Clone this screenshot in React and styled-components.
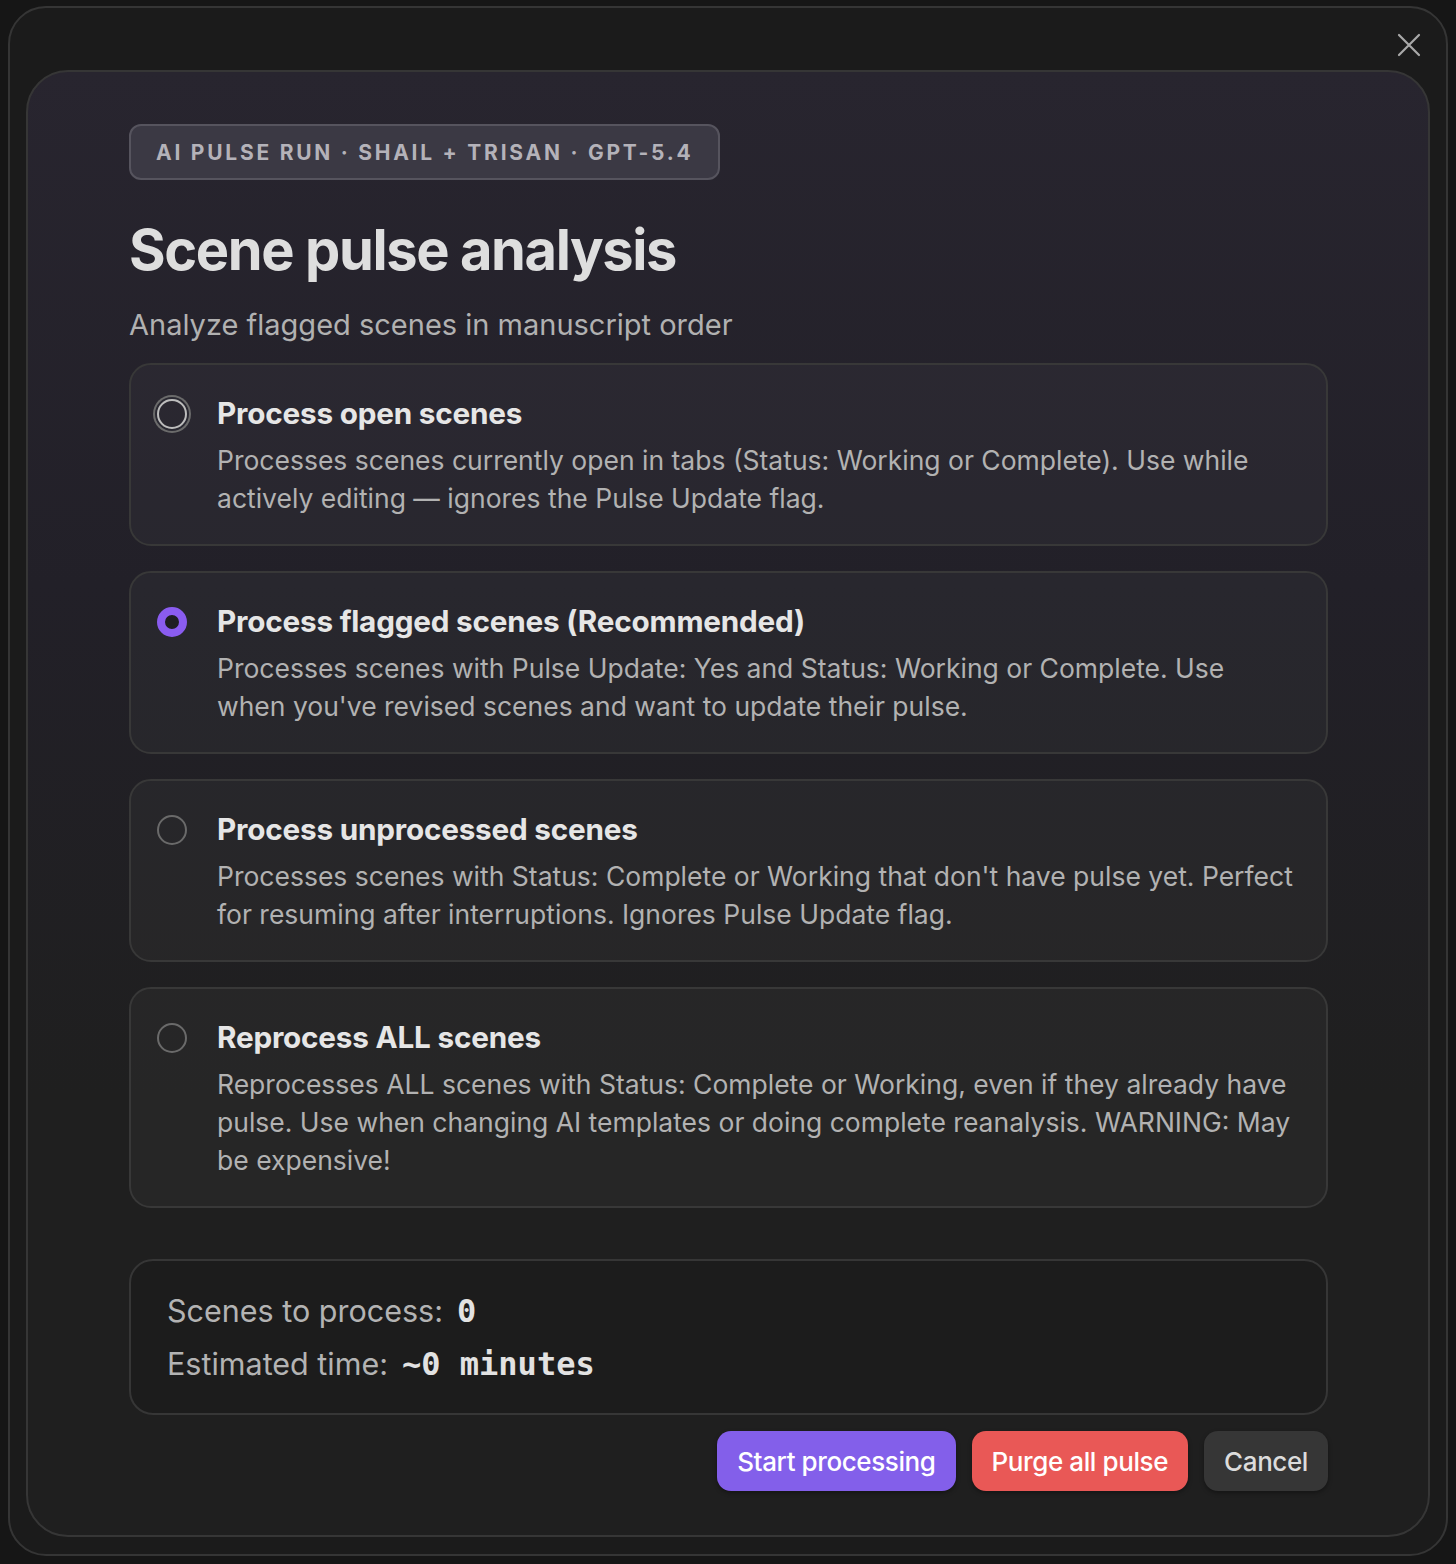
import React, { useState } from "react";
import styled, { createGlobalStyle } from "styled-components";

const Global = createGlobalStyle`
  html, body {
    margin: 0;
    padding: 0;
    background: #161616;
  }
  body {
    font-family: Inter, "Noto Sans", "Liberation Sans", sans-serif;
    -webkit-font-smoothing: antialiased;
  }
`;

const Page = styled.div`
  width: 1456px;
  height: 1564px;
  padding: 6px 8px 8px 8px;
  box-sizing: border-box;
`;

const Modal = styled.div`
  position: relative;
  height: 100%;
  box-sizing: border-box;
  background: #1b1b1b;
  border: 2px solid #353535;
  border-radius: 38px;
  padding: 62px 16px 17px 16px;
`;

const CloseButton = styled.button`
  position: absolute;
  top: 19px;
  right: 19px;
  width: 36px;
  height: 36px;
  padding: 0;
  border: none;
  background: transparent;
  display: flex;
  align-items: center;
  justify-content: center;
  cursor: pointer;
`;

const Panel = styled.div`
  height: 100%;
  box-sizing: border-box;
  border: 2px solid #363636;
  border-radius: 42px;
  background: linear-gradient(180deg, #28252f 0%, #222028 35%, #1f1f1f 70%, #1f1f1f 100%);
  padding: 52px 100px 44px 101px;
  display: flex;
  flex-direction: column;

  & > * {
    flex-shrink: 0;
  }
`;

const Badge = styled.div`
  align-self: flex-start;
  height: 56px;
  box-sizing: border-box;
  display: flex;
  align-items: center;
  padding: 0 25px;
  border: 2px solid #56545e;
  border-radius: 12px;
  background: #3b3944;
  color: #b4b2b9;
  font-size: 21px;
  font-weight: 700;
  letter-spacing: 2.75px;
`;

const Title = styled.h1`
  margin: 35px 0 0 0;
  font-size: 56px;
  line-height: 70px;
  font-weight: 700;
  letter-spacing: -1.4px;
  color: #dedede;
`;

const Subtitle = styled.p`
  margin: 20px 0 18px 0;
  font-size: 29px;
  line-height: 40px;
  color: #b1b1b1;
`;

const Options = styled.div`
  display: flex;
  flex-direction: column;
  gap: 25px;
`;

const Card = styled.label`
  display: flex;
  gap: 30px;
  padding: 30px 30px 27px 26px;
  border: 2px solid #383838;
  border-radius: 22px;
  background: rgba(255, 255, 255, 0.03);
  cursor: pointer;
`;

const Radio = styled.span`
  flex: none;
  width: 30px;
  height: 30px;
  margin-top: 4px;
  box-sizing: border-box;
  border-radius: 50%;
  border: ${(p) => (p.$checked ? "8px solid #8a5cf0" : "2px solid #6a6a6a")};
  background: ${(p) => (p.$checked ? "#1e1e22" : "transparent")};
  box-shadow: ${(p) =>
    p.$focus ? "0 0 0 2px #2a2932, 0 0 0 4px #6b6b6b" : "none"};
  ${(p) => (p.$focus ? "border-color: #bdbdbd;" : "")}
`;

const CardBody = styled.div`
  display: flex;
  flex-direction: column;
  gap: 10px;
`;

const CardTitle = styled.div`
  font-size: 29.7px;
  line-height: 36px;
  font-weight: 700;
  color: #e6e6e6;
  letter-spacing: -0.2px;
`;

const CardText = styled.div`
  font-size: 26.5px;
  line-height: 38px;
  color: #b2b2b2;
`;

const Summary = styled.div`
  margin-top: 51px;
  border: 2px solid #363636;
  border-radius: 24px;
  background: #1c1c1c;
  padding: 29px 36px 28px 36px;
  display: flex;
  flex-direction: column;
  gap: 11px;
`;

const SummaryRow = styled.div`
  font-size: 30.5px;
  line-height: 42px;
  color: #b3b3b3;
  display: flex;
  align-items: baseline;
  gap: 14px;
`;

const Mono = styled.span`
  font-family: "DejaVu Sans Mono", "Liberation Mono", monospace;
  font-weight: 700;
  font-size: 32px;
  color: #e2e2e2;
`;

const Actions = styled.div`
  margin-top: 16px;
  display: flex;
  justify-content: flex-end;
  gap: 16px;
`;

const Button = styled.button`
  height: 60px;
  padding: 0 20px;
  border: none;
  border-radius: 14px;
  font-family: inherit;
  font-size: 26px;
  font-weight: 500;
  letter-spacing: -0.4px;
  color: ${(p) => (p.$variant === "cancel" ? "#dcdcdc" : "#ffffff")};
  background: ${(p) =>
    p.$variant === "primary"
      ? "#835fea"
      : p.$variant === "danger"
      ? "#e95856"
      : "#363636"};
  box-shadow: 0 2px 4px rgba(0, 0, 0, 0.35);
  cursor: pointer;
`;

const options = [
  {
    id: "open",
    title: "Process open scenes",
    text:
      "Processes scenes currently open in tabs (Status: Working or Complete). Use while actively editing — ignores the Pulse Update flag.",
  },
  {
    id: "flagged",
    title: "Process flagged scenes (Recommended)",
    text:
      "Processes scenes with Pulse Update: Yes and Status: Working or Complete. Use when you've revised scenes and want to update their pulse.",
  },
  {
    id: "unprocessed",
    title: "Process unprocessed scenes",
    text:
      "Processes scenes with Status: Complete or Working that don't have pulse yet. Perfect for resuming after interruptions. Ignores Pulse Update flag.",
  },
  {
    id: "all",
    title: "Reprocess ALL scenes",
    text:
      "Reprocesses ALL scenes with Status: Complete or Working, even if they already have pulse. Use when changing AI templates or doing complete reanalysis. WARNING: May be expensive!",
  },
];

export default function App() {
  const [mode, setMode] = useState("flagged");

  return (
    <Page>
      <Global />
      <Modal>
        <CloseButton aria-label="Close">
          <svg width="24" height="24" viewBox="0 0 24 24" fill="none">
            <path
              d="M2 2L22 22M22 2L2 22"
              stroke="#a9a9a9"
              strokeWidth="2.2"
              strokeLinecap="round"
            />
          </svg>
        </CloseButton>
        <Panel>
          <Badge>AI PULSE RUN · SHAIL + TRISAN · GPT-5.4</Badge>
          <Title>Scene pulse analysis</Title>
          <Subtitle>Analyze flagged scenes in manuscript order</Subtitle>
          <Options>
            {options.map((o, i) => (
              <Card key={o.id} onClick={() => setMode(o.id)}>
                <Radio $checked={mode === o.id} $focus={i === 0} />
                <CardBody>
                  <CardTitle>{o.title}</CardTitle>
                  <CardText>{o.text}</CardText>
                </CardBody>
              </Card>
            ))}
          </Options>
          <Summary>
            <SummaryRow>
              Scenes to process: <Mono>0</Mono>
            </SummaryRow>
            <SummaryRow>
              Estimated time: <Mono>~0 minutes</Mono>
            </SummaryRow>
          </Summary>
          <Actions>
            <Button $variant="primary">Start processing</Button>
            <Button $variant="danger">Purge all pulse</Button>
            <Button $variant="cancel">Cancel</Button>
          </Actions>
        </Panel>
      </Modal>
    </Page>
  );
}
